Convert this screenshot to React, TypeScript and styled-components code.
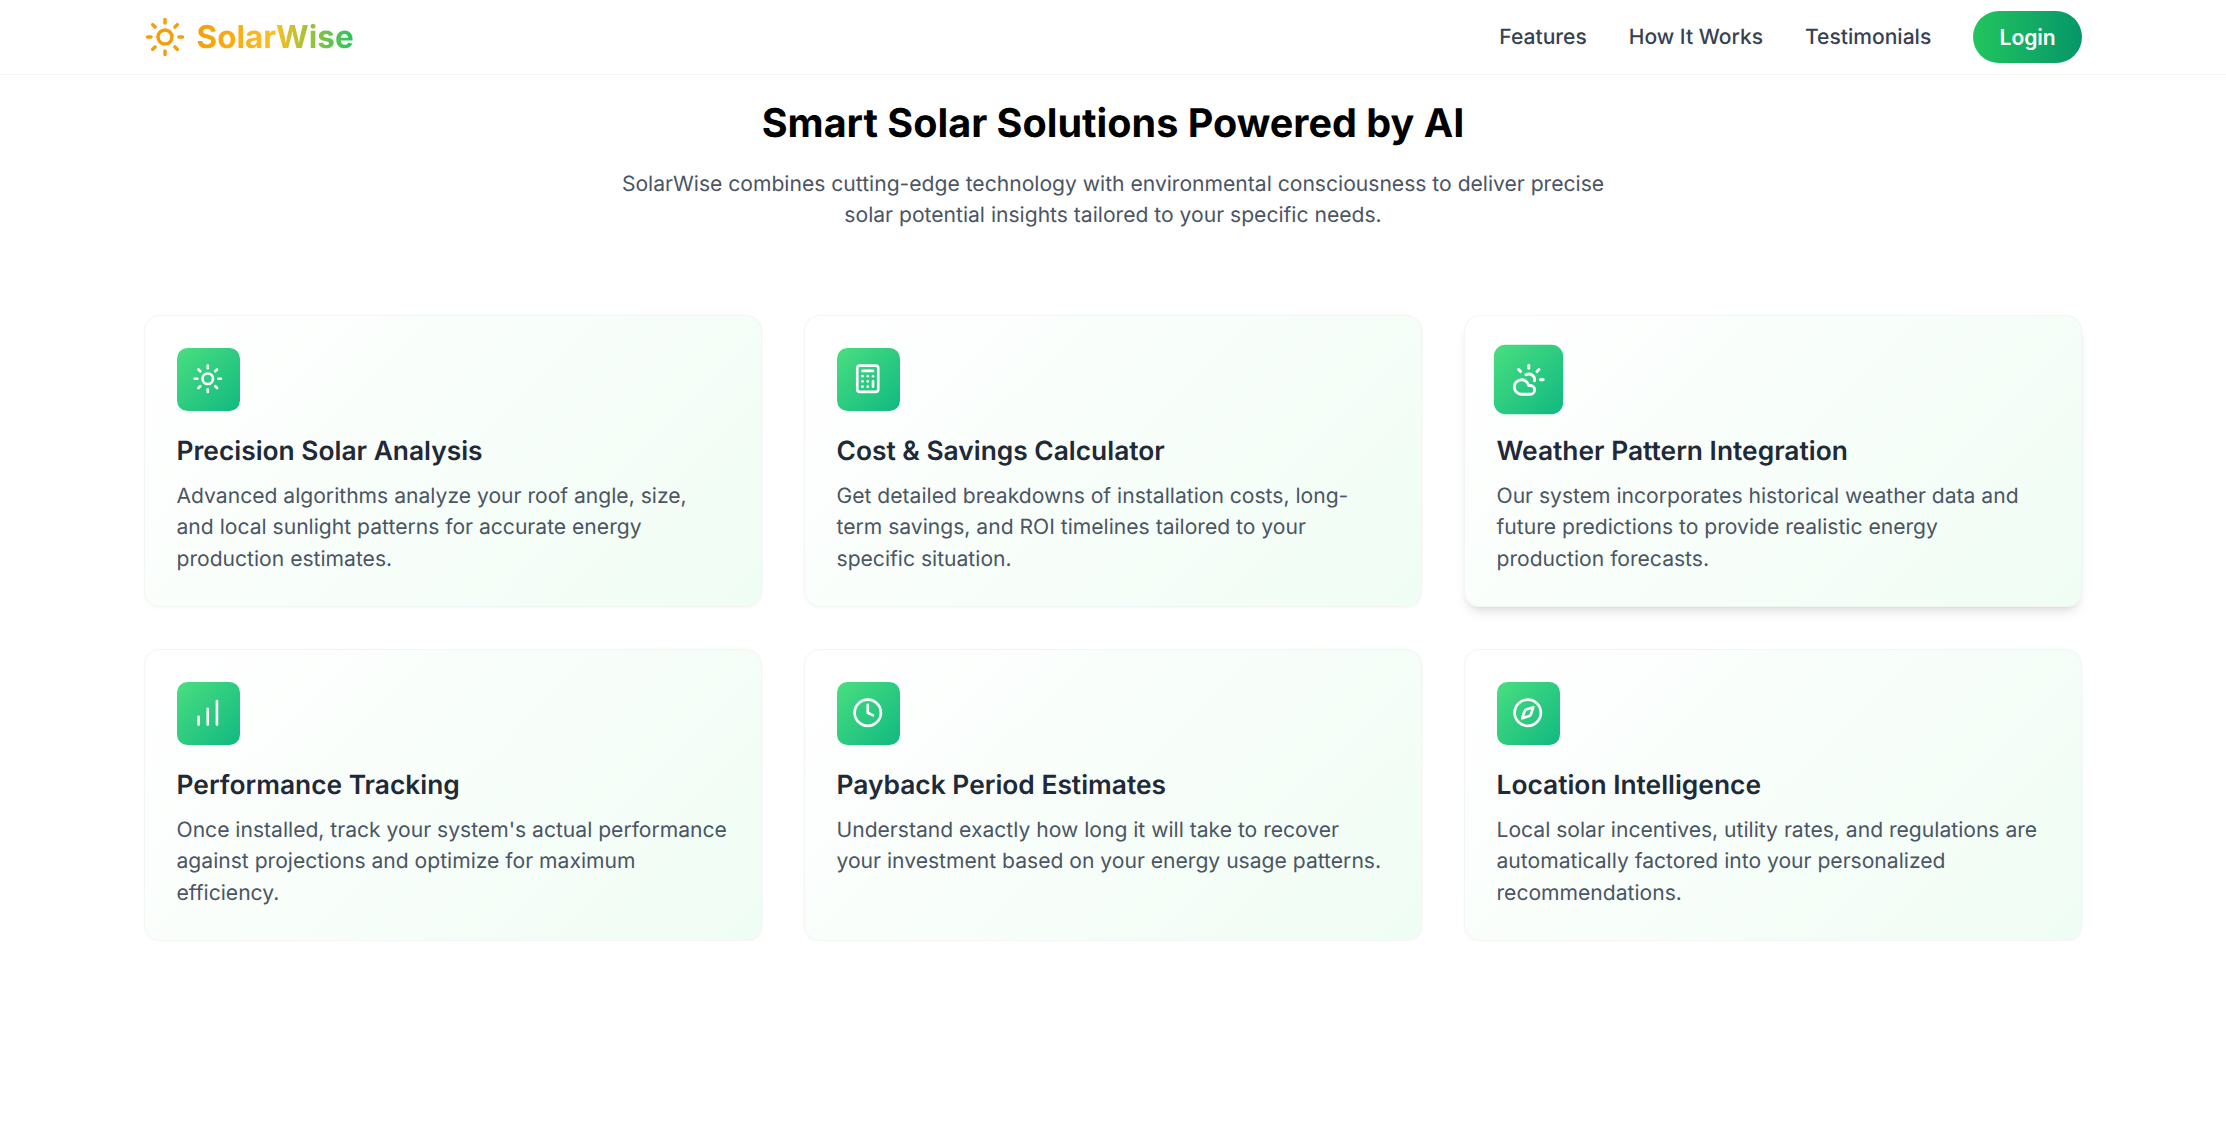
import React from "react";
import styled, { createGlobalStyle } from "styled-components";
import {
  Calculator,
  ChartNoAxesColumnIncreasing,
  Clock,
  CloudSun,
  Compass,
  LucideIcon,
  Sun,
} from "lucide-react";

type Feature = {
  icon: LucideIcon;
  title: string;
  text: string;
  raised?: boolean;
};

const FEATURES: Feature[] = [
  {
    icon: Sun,
    title: "Precision Solar Analysis",
    text: "Advanced algorithms analyze your roof angle, size, and local sunlight patterns for accurate energy production estimates.",
  },
  {
    icon: Calculator,
    title: "Cost & Savings Calculator",
    text: "Get detailed breakdowns of installation costs, long-term savings, and ROI timelines tailored to your specific situation.",
  },
  {
    icon: CloudSun,
    title: "Weather Pattern Integration",
    text: "Our system incorporates historical weather data and future predictions to provide realistic energy production forecasts.",
    raised: true,
  },
  {
    icon: ChartNoAxesColumnIncreasing,
    title: "Performance Tracking",
    text: "Once installed, track your system's actual performance against projections and optimize for maximum efficiency.",
  },
  {
    icon: Clock,
    title: "Payback Period Estimates",
    text: "Understand exactly how long it will take to recover your investment based on your energy usage patterns.",
  },
  {
    icon: Compass,
    title: "Location Intelligence",
    text: "Local solar incentives, utility rates, and regulations are automatically factored into your personalized recommendations.",
  },
];

const NAV_LINKS = ["Features", "How It Works", "Testimonials"];

export default function App() {
  return (
    <>
      <GlobalStyle />
      <Header>
        <Logo>
          <Sun size={42} color="#f59e0b" strokeWidth={2} />
          <LogoText>SolarWise</LogoText>
        </Logo>
        <Nav>
          {NAV_LINKS.map((link) => (
            <NavLink key={link} href="#">
              {link}
            </NavLink>
          ))}
          <LoginButton>Login</LoginButton>
        </Nav>
      </Header>
      <Main>
        <Intro>
          <Heading>Smart Solar Solutions Powered by AI</Heading>
          <Subtitle>
            SolarWise combines cutting-edge technology with environmental consciousness to deliver
            precise solar potential insights tailored to your specific needs.
          </Subtitle>
        </Intro>
        <FeatureGrid>
          {FEATURES.map((feature) => (
            <Card key={feature.title} $raised={feature.raised}>
              <IconBox $raised={feature.raised}>
                <feature.icon size={31.5} color="#fff" strokeWidth={2} />
              </IconBox>
              <CardTitle>{feature.title}</CardTitle>
              <CardText>{feature.text}</CardText>
            </Card>
          ))}
        </FeatureGrid>
      </Main>
    </>
  );
}

const GlobalStyle = createGlobalStyle`
  * {
    box-sizing: border-box;
  }

  body {
    margin: 0;
    background: #fff;
    font-family: Inter, "Liberation Sans", sans-serif;
    text-rendering: geometricPrecision;
  }
`;

const Header = styled.header`
  display: flex;
  align-items: center;
  justify-content: space-between;
  height: 75px;
  padding: 0 144px;
  border-bottom: 1px solid #f3f4f6;
  background: #fff;
`;

const Logo = styled.div`
  display: flex;
  align-items: center;
  gap: 10.5px;
`;

const LogoText = styled.span`
  font-size: 31.5px;
  font-weight: 700;
  line-height: 42px;
  background: linear-gradient(90deg, #f59e0b, #fbbf24, #22c55e);
  -webkit-background-clip: text;
  background-clip: text;
  color: transparent;
`;

const Nav = styled.nav`
  display: flex;
  align-items: center;
  gap: 42px;
`;

const NavLink = styled.a`
  padding-top: 2px;
  font-size: 21.05px;
  font-weight: 500;
  line-height: 31.5px;
  color: #374151;
  text-decoration: none;
`;

const LoginButton = styled.button`
  height: 52.5px;
  padding: 0 26.25px;
  border: none;
  border-radius: 26.25px;
  background: linear-gradient(90deg, #22c55e, #059669);
  color: #fff;
  font-family: inherit;
  font-size: 21.05px;
  font-weight: 600;
`;

const Main = styled.main`
  padding: 0 144px;
`;

const Intro = styled.section`
  display: flex;
  flex-direction: column;
  align-items: center;
  padding-top: 22px;
`;

const Heading = styled.h1`
  margin: 0;
  font-size: 39.55px;
  font-weight: 700;
  line-height: 52.5px;
  color: #000;
`;

const Subtitle = styled.p`
  width: 1008px;
  margin: 19px 0 0;
  font-size: 21.1px;
  line-height: 31.5px;
  text-align: center;
  color: #4b5563;
`;

const FeatureGrid = styled.section`
  display: grid;
  grid-template-columns: repeat(3, 1fr);
  gap: 42px;
  margin-top: 83px;
`;

const Card = styled.article<{ $raised?: boolean }>`
  display: flex;
  flex-direction: column;
  align-items: flex-start;
  padding: 32px 33px 30.25px 31.5px;
  border: 1px solid #f3f4f6;
  border-radius: 15.75px;
  background: linear-gradient(135deg, #fff, #f0fdf4);
  box-shadow: ${({ $raised }) =>
    $raised
      ? "0 8px 12px -3px rgba(0, 0, 0, 0.1), 0 4px 6px -4px rgba(0, 0, 0, 0.1)"
      : "0 1px 3px rgba(0, 0, 0, 0.04)"};
`;

const IconBox = styled.div<{ $raised?: boolean }>`
  display: flex;
  align-items: center;
  justify-content: center;
  flex: none;
  width: 63px;
  height: 63px;
  border-radius: 10.5px;
  background: linear-gradient(135deg, #4ade80, #10b981);
  transform: ${({ $raised }) => ($raised ? "scale(1.1)" : "none")};
`;

const CardTitle = styled.h3`
  margin: 22px 0 11.5px;
  font-size: 26.35px;
  font-weight: 600;
  line-height: 36.75px;
  color: #1f2937;
`;

const CardText = styled.p`
  margin: 0;
  font-size: 21.1px;
  line-height: 31.5px;
  color: #4b5563;
`;
